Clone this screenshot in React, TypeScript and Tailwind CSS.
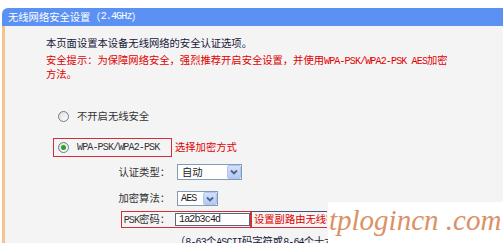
import React from "react";

function Radio({ checked }: { checked?: boolean }) {
  return (
    <span className="w-[11px] h-[11px] rounded-full border border-[#6d7a8f] bg-gradient-to-br from-[#dcdcd8] to-white flex items-center justify-center shrink-0">
      {checked ? <span className="w-[5px] h-[5px] rounded-full bg-[#2aa32a]" /> : null}
    </span>
  );
}

function Chevron() {
  return (
    <span className="w-[14px] h-full bg-gradient-to-b from-[#d3dffb] to-[#b5c8f5] border border-[#b3c5ee] rounded-[2px] flex items-center justify-center">
      <svg width="8" height="6" viewBox="0 0 8 6">
        <path d="M1 1.5 L4 4.5 L7 1.5" fill="none" stroke="#4d6288" strokeWidth="1.8" />
      </svg>
    </span>
  );
}

const A = "font-['Liberation_Mono',monospace] text-[10px] tracking-[-0.85px]";

export default function App() {
  return (
    <div className="w-[503px] h-[243px] bg-white overflow-hidden relative font-['Noto_Sans_CJK_SC',sans-serif] text-[10.3px]">
      <div className="flex flex-col h-full pt-[8px] pl-[2px]">
        <div className="h-[18px] shrink-0 bg-[#5c91f4] rounded-tl-[6px] text-white flex items-center pl-[6px] leading-none whitespace-nowrap">
          无线网络安全设置（<span className={A}>2.4GHz</span>）
        </div>
        <div className="flex-1 border-l-[3px] border-[#f7c28c] bg-[#f4f4f4] flex flex-col">
          <div className="ml-[41px] mt-[10px] leading-[13px] text-[#18183a] whitespace-nowrap">
            本页面设置本设备无线网络的安全认证选项。
          </div>
          <div className="ml-[41px] mt-[4.5px] leading-[12px] text-[#e00000] whitespace-nowrap">
            安全提示：为保障网络安全，强烈推荐开启安全设置，并使用<span className={A}>WPA-PSK/WPA2-PSK AES</span>加密
            <br />
            方法。
          </div>
          <div className="ml-[53px] mt-[28.5px] h-[16px] flex items-center text-[#333]">
            <Radio />
            <span className="ml-[8px] leading-none">不开启无线安全</span>
          </div>
          <div className="ml-[48px] mt-[14px] h-[19px] flex items-center">
            <div className="w-[119px] h-[19px] border border-[#cf2e3a] flex items-center pl-[4px] text-[#333]">
              <Radio checked />
              <span className={"ml-[8px] leading-none " + A}>WPA-PSK/WPA2-PSK</span>
            </div>
            <span className="ml-[3px] text-[#e00000] leading-none">选择加密方式</span>
          </div>
          <div className="ml-[106px] mt-[7px] h-[16px] flex items-center text-[#333]">
            <span className="w-[59px] text-right leading-none">认证类型：</span>
            <div className="ml-[7px] w-[65px] h-[16px] bg-white border border-[#7f9db9] flex items-center">
              <span className="flex-1 pl-[4px] leading-none text-[#222]">自动</span>
              <Chevron />
            </div>
          </div>
          <div className="ml-[106px] mt-[11px] h-[15px] flex items-center text-[#333]">
            <span className="w-[59px] text-right leading-none">加密算法：</span>
            <div className="ml-[7px] w-[41px] h-[15px] bg-white border border-[#7f9db9] flex items-center">
              <span className={"flex-1 pl-[3px] leading-none text-[#222] " + A}>AES</span>
              <Chevron />
            </div>
          </div>
          <div className="ml-[116px] mt-[5px] h-[17px] flex items-stretch text-[#333]">
            <div className="w-[130px] border border-[#cf2e3a] flex items-center">
              <span className="w-[48px] text-right leading-none whitespace-nowrap">
                <span className={A}>PSK</span>密码：
              </span>
              <div className="ml-[5px] flex-1 h-[13px] bg-white border border-[#5a6680] flex items-center pl-[3px]">
                <span className={"leading-none text-[#222] " + A}>1a2b3c4d</span>
              </div>
            </div>
            <div className="w-[76px] border-t border-t-[#46557e] border-l border-l-[#cf2e3a] border-b border-b-[#cf2e3a] flex items-center pl-[2px] text-[#e00000] leading-none whitespace-nowrap overflow-hidden">
              设置副路由无线密码
            </div>
          </div>
          <div className="ml-[170px] mt-[6px] leading-[13px] text-[#18183a] whitespace-nowrap">
            （<span className={A}>8-63</span>个<span className={A}>ASCII</span>码字符或<span className={A}>8-64</span>个十六进制字符）
          </div>
        </div>
      </div>
      <div className="absolute left-[328px] top-[202px] w-[175px] h-[41px] bg-white overflow-hidden">
        <span className="absolute left-[1px] top-[-2px] font-['Liberation_Serif',serif] italic text-[29px] leading-[40px] text-[#dc9166] whitespace-nowrap">
          tplogincn .com
        </span>
      </div>
    </div>
  );
}
